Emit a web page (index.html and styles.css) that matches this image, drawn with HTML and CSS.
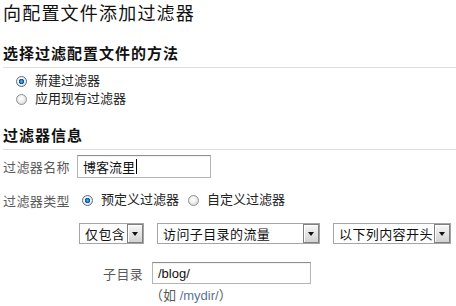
FILE: index.html
```html
<!DOCTYPE html>
<html lang="zh-CN">
<head>
<meta charset="utf-8">
<title>向配置文件添加过滤器</title>
<link rel="stylesheet" href="styles.css">
</head>
<body>
<div class="page">
  <h1 class="title">向配置文件添加过滤器</h1>

  <h2 class="section">选择过滤配置文件的方法</h2>
  <div class="radio-list">
    <div class="radio-row"><span class="radio checked"></span><span class="radio-text">新建过滤器</span></div>
    <div class="radio-row"><span class="radio"></span><span class="radio-text">应用现有过滤器</span></div>
  </div>

  <h2 class="section section-second">过滤器信息</h2>

  <div class="form-row name-row">
    <span class="label">过滤器名称</span>
    <div class="text-input name-input"><span class="input-text">博客流里</span><span class="caret"></span></div>
  </div>

  <div class="form-row type-row">
    <span class="label">过滤器类型</span>
    <div class="inline-radios">
      <span class="radio checked"></span><span class="radio-text">预定义过滤器</span>
      <span class="radio radio-gap"></span><span class="radio-text">自定义过滤器</span>
    </div>
  </div>

  <div class="select-row">
    <div class="select sel-1"><span class="select-text">仅包含</span><span class="select-btn"><span class="tri"></span></span></div>
    <div class="select sel-2"><span class="select-text">访问子目录的流量</span><span class="select-btn"><span class="tri"></span></span></div>
    <div class="select sel-3"><span class="select-text">以下列内容开头</span><span class="select-btn"><span class="tri"></span></span></div>
  </div>

  <div class="sub-row">
    <span class="sub-label">子目录</span>
    <div class="text-input dir-input"><span class="input-text latin">/blog/</span></div>
  </div>
  <div class="hint">（如 <span class="hint-example">/mydir/</span>）</div>
</div>
</body>
</html>
```

FILE: styles.css
```css
html, body {
  margin: 0;
  padding: 0;
  background: #ffffff;
}

body {
  font-family: "Liberation Sans", "Noto Sans CJK SC", sans-serif;
  color: #222222;
}

.page {
  width: 456px;
  height: 306px;
  overflow: hidden;
}

.title {
  margin: 2px 0 0 3px;
  font-size: 18px;
  line-height: 24px;
  font-weight: normal;
  letter-spacing: 1.2px;
  color: #111111;
}

.section {
  margin: 19px 0 0 3px;
  padding-bottom: 4px;
  font-size: 15px;
  line-height: 18px;
  font-weight: bold;
  letter-spacing: 1px;
  color: #111111;
  border-bottom: 1px solid #dedede;
}

.section-second {
  margin-top: 19px;
}

.radio-list {
  padding: 4px 0 0 16px;
}

.radio-row {
  display: flex;
  align-items: center;
  height: 18px;
}

.radio {
  flex: none;
  width: 9px;
  height: 9px;
  border: 1px solid #8e8f8f;
  border-radius: 50%;
  background: radial-gradient(circle at 45% 40%, #ffffff 0%, #f2f2f2 40%, #c9c9c9 100%);
  box-sizing: content-box;
}

.radio.checked {
  border-color: #5a6d84;
  background:
    radial-gradient(circle at 50% 50%, #4fb5ff 0%, #1570c9 28%, #0d3d78 40%, rgba(255,255,255,0) 46%),
    radial-gradient(circle at 45% 40%, #ffffff 0%, #eef2f6 55%, #c3ccd6 100%);
}

.radio-text {
  margin-left: 8px;
  font-size: 13px;
  line-height: 18px;
  color: #222222;
}

.form-row {
  display: flex;
  align-items: center;
  padding-left: 3px;
}

.label {
  width: 74px;
  font-size: 13px;
  letter-spacing: 0.4px;
  color: #5a5a5a;
  white-space: nowrap;
}

.name-row {
  margin-top: 5px;
  height: 23px;
}

.text-input {
  display: flex;
  align-items: center;
  box-sizing: border-box;
  border: 1px solid #b5b5b5;
  border-top-color: #8f8f8f;
  background: #ffffff;
  box-shadow: inset 0 1px 1px rgba(0,0,0,0.06);
}

.name-input {
  width: 134px;
  height: 23px;
  padding-left: 5px;
}

.input-text {
  font-size: 13px;
  color: #111111;
  white-space: nowrap;
}

.input-text.latin {
  font-size: 13px;
}

.caret {
  width: 1px;
  height: 15px;
  margin-left: 1px;
  background: #000000;
}

.type-row {
  margin-top: 11px;
  height: 22px;
}

.inline-radios {
  display: flex;
  align-items: center;
  margin-left: 5px;
}

.radio-gap {
  margin-left: 9px;
}

.select-row {
  display: flex;
  gap: 13px;
  margin-top: 12px;
  padding-left: 79px;
}

.select {
  display: flex;
  align-items: center;
  justify-content: space-between;
  box-sizing: border-box;
  height: 21px;
  border: 1px solid #a5a5a5;
  background: #ffffff;
  padding-left: 5px;
}

.sel-1 { width: 65px; }
.sel-2 { width: 163px; }
.sel-3 { width: 118px; }

.select-text {
  font-size: 13px;
  letter-spacing: 0.4px;
  color: #111111;
  white-space: nowrap;
}

.select-btn {
  flex: none;
  display: flex;
  align-items: center;
  justify-content: center;
  box-sizing: border-box;
  width: 16px;
  height: 19px;
  border: 1px solid #7f7f7f;
  box-shadow: inset 1px 1px 0 #ffffff;
  background: linear-gradient(#f7f7f7, #d2d2d2);
}

.tri {
  width: 0;
  height: 0;
  border-left: 3.5px solid transparent;
  border-right: 3.5px solid transparent;
  border-top: 4px solid #111111;
}

.sub-row {
  display: flex;
  align-items: center;
  margin-top: 18px;
  padding-left: 103px;
  height: 22px;
}

.sub-label {
  width: 49px;
  font-size: 13px;
  letter-spacing: 0.4px;
  color: #5a5a5a;
}

.dir-input {
  width: 159px;
  height: 22px;
  padding-left: 5px;
}

.hint {
  margin-top: 4px;
  padding-left: 150px;
  font-size: 13px;
  line-height: 16px;
  color: #5a5a5a;
}

.hint-example {
  color: #5d7199;
}
```
